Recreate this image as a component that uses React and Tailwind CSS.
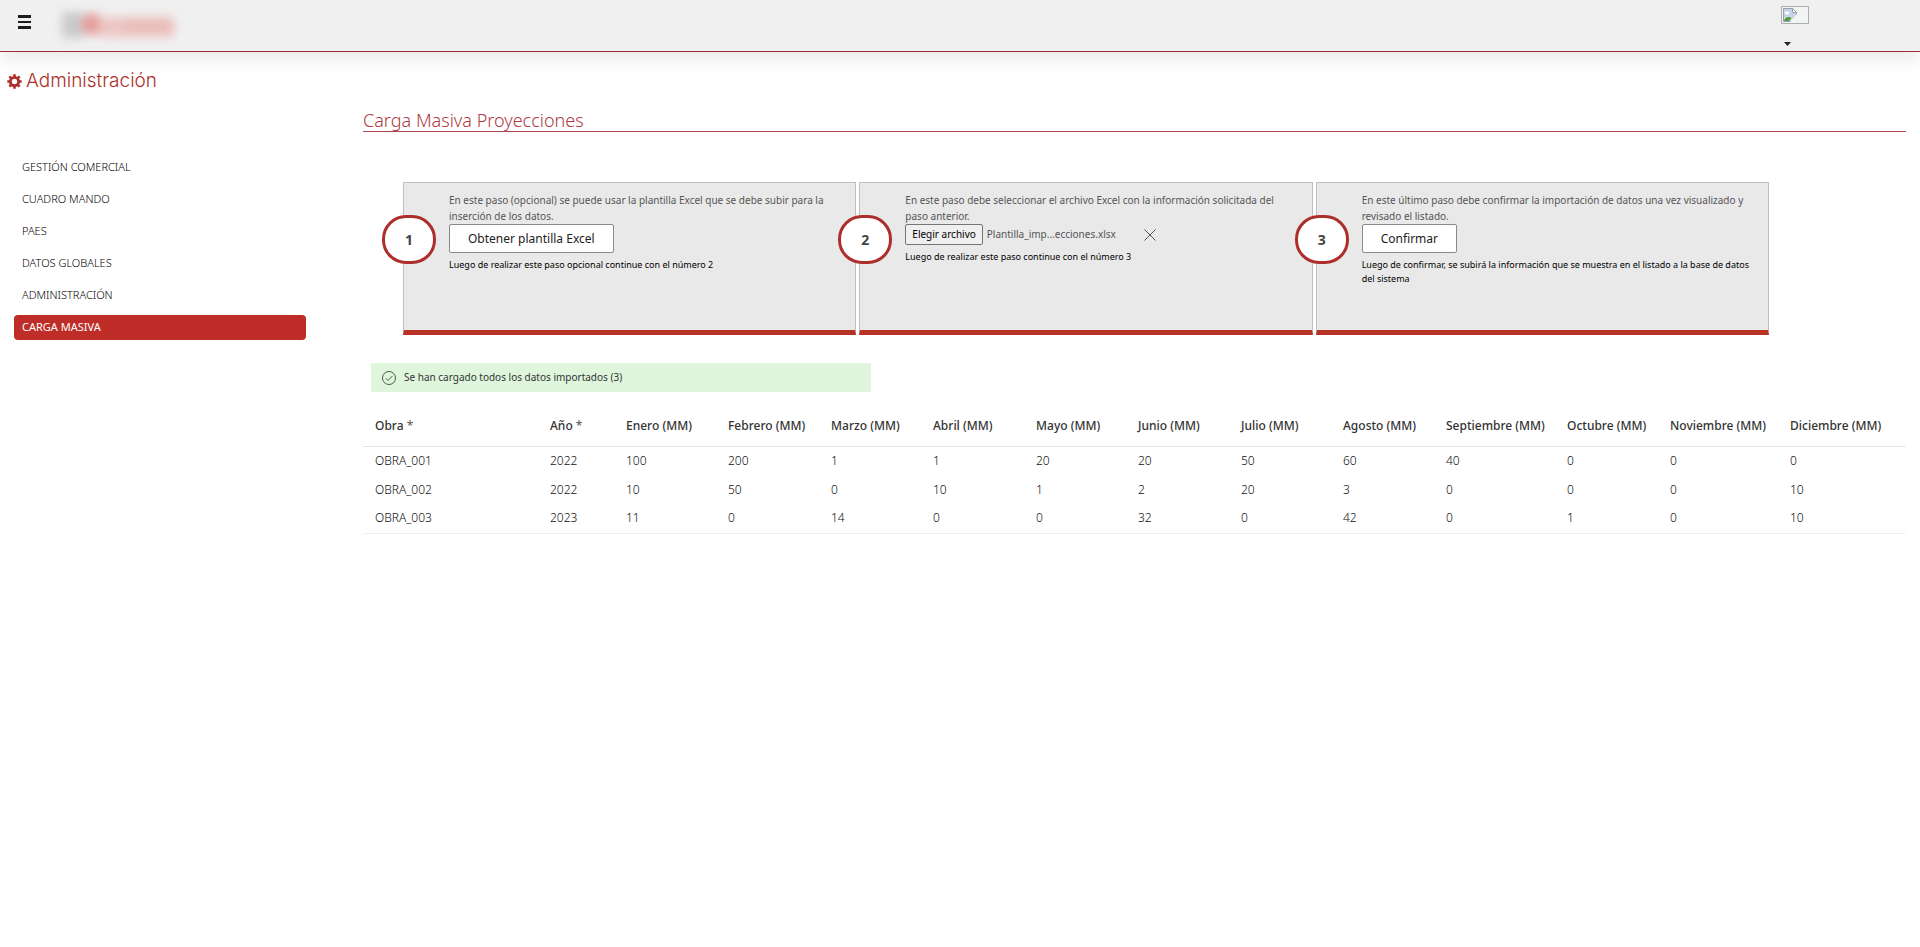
import React from "react";

const menu = ["GESTIÓN COMERCIAL", "CUADRO MANDO", "PAES", "DATOS GLOBALES", "ADMINISTRACIÓN", "CARGA MASIVA"];

const columns = [
  { name: "Obra", required: true, width: "w-[175px]" },
  { name: "Año", required: true, width: "w-[76px]" },
  { name: "Enero (MM)", width: "w-[102px]" },
  { name: "Febrero (MM)", width: "w-[103px]" },
  { name: "Marzo (MM)", width: "w-[102px]" },
  { name: "Abril (MM)", width: "w-[103px]" },
  { name: "Mayo (MM)", width: "w-[102px]" },
  { name: "Junio (MM)", width: "w-[103px]" },
  { name: "Julio (MM)", width: "w-[102px]" },
  { name: "Agosto (MM)", width: "w-[103px]" },
  { name: "Septiembre (MM)", width: "w-[121px]" },
  { name: "Octubre (MM)", width: "w-[103px]" },
  { name: "Noviembre (MM)", width: "w-[120px]" },
  { name: "Diciembre (MM)", width: "w-[128px]" },
];

const rows = [
  ["OBRA_001", 2022, 100, 200, 1, 1, 20, 20, 50, 60, 40, 0, 0, 0],
  ["OBRA_002", 2022, 10, 50, 0, 10, 1, 2, 20, 3, 0, 0, 0, 10],
  ["OBRA_003", 2023, 11, 0, 14, 0, 0, 32, 0, 42, 0, 1, 0, 10],
];

function Header() {
  return (
    <header className="h-[52px] flex justify-between bg-[#f0f0f0] border-b border-[#9c2c38] shadow-[0_6px_20px_rgba(0,0,0,0.1)]">
      <div className="flex items-start pl-[18px]">
        <button type="button" aria-label="Menú" className="mt-[15px]">
          <svg className="w-[13px] h-[14px]" viewBox="0 0 13 14" fill="#1c1c1c">
            <path d="M0 0h13v3H0zM0 6h13v2H0zM0 11h13v3H0z" />
          </svg>
        </button>
        {/* Logo */}
        <svg className="ml-5 w-[140px] h-[51px]" viewBox="0 0 140 51" aria-hidden="true">
          <defs>
            <filter id="soft" x="-30%" y="-60%" width="160%" height="220%">
              <feGaussianBlur stdDeviation="5" />
            </filter>
          </defs>
          <g filter="url(#soft)">
            <rect x="11" y="12" width="22" height="26" fill="#cacaca" />
            <circle cx="41" cy="24" r="11" fill="#e79c9c" />
            <rect x="48" y="17" width="75" height="20" fill="#edc6c4" />
            <rect x="72" y="18" width="50" height="16" fill="#eabebb" />
          </g>
        </svg>
      </div>
      <button type="button" aria-label="Usuario" className="flex flex-col items-start pt-[6px] mr-[111px]">
        <svg className="w-7 h-[18px]" viewBox="0 0 28 18">
          <rect x="0.5" y="0.5" width="27" height="17" fill="#f3f4f3" stroke="#a9b1b3" />
          <path d="M2.500 2.500h9l4 4v9h-13z" fill="#c6d4ea" stroke="#9aa0aa" />
          <path d="M11.500 2.500v4h4z" fill="#fff" stroke="#9aa0aa" />
          <ellipse cx="6" cy="7" rx="2.4" ry="1.4" fill="#fff" />
          <path d="M3 15c1-4 5-5 7.500-3l-2.500 3z" fill="#4f9c3a" />
          <path d="M9 16l7-8v8z" fill="#f3f4f3" />
        </svg>
        <svg className="mt-[18px] ml-[3px] w-[7px] h-1" viewBox="0 0 7 4" fill="#222">
          <path d="M0 0h7L3.500 4z" />
        </svg>
      </button>
    </header>
  );
}

function GearIcon() {
  return (
    <svg className="w-[15px] h-[15px]" viewBox="0 0 15 15" fill="none" stroke="currentColor">
      <circle cx="7.5" cy="7.5" r="4.1" strokeWidth="2.8" />
      <path
        strokeWidth="2.6"
        d="M7.500 0.300v2.700M7.500 12v2.700M0.300 7.500h2.700M12 7.500h2.700M2.400 2.400l1.900 1.900M10.700 10.700l1.900 1.900M12.600 2.400l-1.900 1.900M4.300 10.700l-1.900 1.900"
      />
    </svg>
  );
}

function Step({ number, text, note, children }) {
  return (
    <section className="relative h-[153px] bg-[#e9e9e9] border border-b-[5px] border-[#bfbfbf] border-b-[#b73225] pl-[45px] pr-4 pt-[9px]">
      <span className="absolute -left-[22px] top-8 w-[54px] h-[49px] rounded-[24px] border-[3px] border-[#ad2f2b] bg-white flex items-center justify-center text-sm font-bold text-[#444]">
        {number}
      </span>
      <p className="text-[10px] leading-4 text-[#555]">{text}</p>
      {children}
      <p className="mt-[5px] text-[9px] leading-[14px] text-black">{note}</p>
    </section>
  );
}

function StepButton({ children }) {
  return (
    <button type="button" className="block h-[29px] px-[18px] bg-white border border-[#8a8a8a] rounded-[2px] text-xs text-[#222]">
      {children}
    </button>
  );
}

export default function App() {
  return (
    <div className="min-h-screen bg-white font-['Noto_Sans',sans-serif]">
      <Header />

      <h1 className="mt-[19px] ml-[7px] flex items-center gap-1 text-[19px] leading-5 font-['Inter',sans-serif] font-light text-[#ad2f2b]">
        <GearIcon />
        Administración
      </h1>

      <div className="flex items-start pr-[14px]">
        <nav className="w-[292px] shrink-0 ml-[14px] mt-16 flex flex-col gap-[7px]">
          {menu.map((item) => (
            <a
              key={item}
              href="#"
              className={`h-[25px] px-2 flex items-center rounded text-[11px] ${
                item === "CARGA MASIVA" ? "bg-[#be2d27] text-white" : "font-light text-black"
              }`}
            >
              {item}
            </a>
          ))}
        </nav>

        <main className="flex-1 min-w-0 ml-[57px] mt-[18px]">
          <h2 className="border-b border-[#ad4a52] text-lg leading-[22px] font-light text-[#ad3a42]">
            Carga Masiva Proyecciones
          </h2>

          <div className="mt-[50px] ml-10 mr-[137px] grid grid-cols-3 gap-[3px]">
            <Step
              number={1}
              text="En este paso (opcional) se puede usar la plantilla Excel que se debe subir para la inserción de los datos."
              note="Luego de realizar este paso opcional continue con el número 2"
            >
              <StepButton>Obtener plantilla Excel</StepButton>
            </Step>
            <Step
              number={2}
              text="En este paso debe seleccionar el archivo Excel con la información solicitada del paso anterior."
              note="Luego de realizar este paso continue con el número 3"
            >
              <div className="flex items-center">
                <label
                  htmlFor="archivo"
                  className="h-[21px] px-[6px] flex items-center bg-[#efefef] border border-[#767676] rounded-[2px] text-[10px] text-black"
                >
                  Elegir archivo
                </label>
                <input id="archivo" type="file" accept=".xlsx" className="sr-only" />
                <span className="ml-1 text-[10px] text-[#555]">Plantilla_imp...ecciones.xlsx</span>
                <button type="button" aria-label="Quitar archivo" className="ml-7">
                  <svg className="w-3 h-3" viewBox="0 0 12 12" stroke="#444" strokeWidth="0.9">
                    <path d="M0.500 0.500l11 11M11.500 0.500l-11 11" />
                  </svg>
                </button>
              </div>
            </Step>
            <Step
              number={3}
              text="En este último paso debe confirmar la importación de datos una vez visualizado y revisado el listado."
              note="Luego de confirmar, se subirá la información que se muestra en el listado a la base de datos del sistema"
            >
              <StepButton>Confirmar</StepButton>
            </Step>
          </div>

          <div role="status" className="mt-7 ml-2 w-[500px] h-[29px] px-[11px] flex items-center gap-2 bg-[#dff6dd] text-[10px] text-[#333]">
            <svg className="w-[14px] h-[14px]" viewBox="0 0 14 14" fill="none" stroke="#3c4a3c">
              <circle cx="7" cy="7" r="6.500" strokeWidth="0.9" />
              <path d="M3.800 7.300l2.200 2.200 4.300-4.400" strokeWidth="0.9" />
            </svg>
            Se han cargado todos los datos importados (3)
          </div>

          <table className="mt-[15px] w-full table-fixed border-collapse text-left text-xs text-[#111]">
            <thead>
              <tr className="h-[39px] border-b border-[#e6e6e6]">
                {columns.map((col) => (
                  <th key={col.name} className={`${col.width} pl-3 font-medium whitespace-nowrap text-[#333]`}>
                    {col.name}
                    {col.required && <span className="font-normal text-[#555]"> *</span>}
                  </th>
                ))}
              </tr>
            </thead>
            <tbody className="border-b border-[#f0f0f0]">
              {rows.map((row) => (
                <tr key={row[0]} className="h-[29px]">
                  {row.map((value, i) => (
                    <td key={i} className="pl-3 font-light">{value}</td>
                  ))}
                </tr>
              ))}
            </tbody>
          </table>
        </main>
      </div>
    </div>
  );
}
